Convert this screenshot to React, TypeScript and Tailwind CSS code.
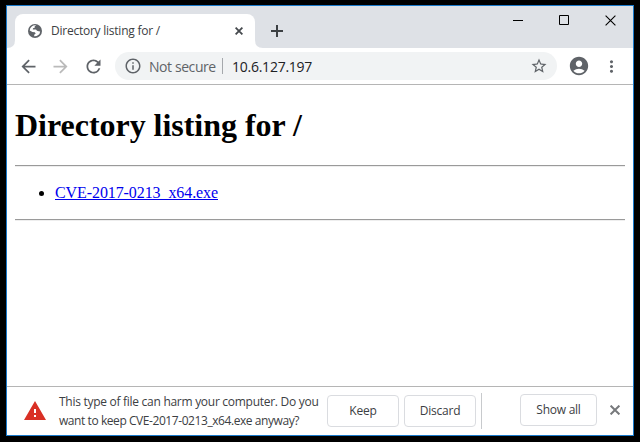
import React from "react";
import {
  MdArrowBack, MdArrowForward, MdRefresh, MdInfoOutline,
  MdStarBorder, MdAccountCircle, MdMoreVert, MdWarning,
} from "react-icons/md";

const Cross = ({ size, width, className }: { size: number; width: number; className: string }) => (
  <svg width={size} height={size} viewBox={`0 0 ${size} ${size}`} className={className} stroke="currentColor" strokeWidth={width} fill="none">
    <path d={`M.6 .6L${size - 0.6} ${size - 0.6}M${size - 0.6} .6L.6 ${size - 0.6}`} />
  </svg>
);

const Globe = () => (
  <svg width="14" height="14" viewBox="0 0 14 14" className="shrink-0">
    <circle cx="7" cy="7" r="7" fill="#5f6368" />
    <path d="M8.2 1.5L6.7 2.2V3.8L5 4.2L4.8 5.6H8L9 6.8L10.6 7.2L12.2 7.4A5.4 5.4 0 0 1 6.2 12.3V10.8L7.7 9.6L6.8 8.3L4.4 8L1.7 6.6A5.4 5.4 0 0 1 8.2 1.5Z" fill="#fff" />
  </svg>
);

function TabStrip() {
  return (
    <div className="flex h-[42px] bg-[#dee1e6]">
      <div className="flex w-2 items-end">
        <svg width="8" height="8" viewBox="0 0 8 8"><path d="M0 8Q8 8 8 0V8Z" fill="#fff" /></svg>
      </div>
      <div className="mt-2 flex h-[34px] w-[240px] items-center rounded-t-lg bg-white pl-[13px]">
        <Globe />
        <span className="ml-[9px] w-[182px] whitespace-nowrap text-[12px] tracking-[-0.24px] text-[#3c4043]">Directory listing for /</span>
        <Cross size={8} width={1.8} className="ml-[2px] shrink-0 text-[#45494d]" />
      </div>
      <div className="flex w-2 items-end">
        <svg width="8" height="8" viewBox="0 0 8 8"><path d="M8 8Q0 8 0 0V8Z" fill="#fff" /></svg>
      </div>
      <svg width="12" height="12" viewBox="0 0 12 12" className="ml-2 mt-[19px]"><path d="M0 6H12M6 0V12" stroke="#3c4043" strokeWidth="2" /></svg>
      <div className="ml-auto flex pr-[17px] pt-[9px] text-black">
        <svg width="10" height="11" viewBox="0 0 10 11"><path d="M0 5.5H10" stroke="currentColor" /></svg>
        <svg width="10" height="10" viewBox="0 0 10 10" className="ml-9"><path d="M.5 .5H9.5V9.5H.5Z" stroke="currentColor" fill="none" /></svg>
        <Cross size={11} width={1.1} className="ml-[36px]" />
      </div>
    </div>
  );
}

function Toolbar() {
  return (
    <div className="flex h-[37px] items-center border-b border-[#b5b5b5] bg-white text-[#5f6368]">
      <MdArrowBack size={21} className="ml-[11px]" />
      <MdArrowForward size={21} className="ml-[11px] text-[#bababa]" />
      <MdRefresh size={21} className="ml-[12px]" />
      <div className="ml-[11px] flex h-7 w-[442px] items-center rounded-full bg-[#f1f3f4] pl-[9px] pr-[9px]">
        <MdInfoOutline size={18} />
        <span className="ml-[7px] w-[73px] whitespace-nowrap text-[14px] tracking-[-0.42px]">Not secure</span>
        <span className="h-4 w-px bg-[#a5a8ac]" />
        <span className="ml-[9px] whitespace-nowrap text-[14px] tracking-[-0.25px] text-[#202124]">10.6.127.197</span>
        <MdStarBorder size={18} className="ml-auto" />
      </div>
      <MdAccountCircle size={22} className="ml-[11px]" />
      <MdMoreVert size={19} className="ml-[12px]" />
    </div>
  );
}

function Page() {
  return (
    <main className="h-[301px] bg-white px-2 pt-[21px] font-['Liberation_Serif',serif] text-black">
      <h1 className="h-[38px] whitespace-nowrap text-[32px] font-bold leading-[38px] tracking-[-0.03px]">Directory listing for /</h1>
      <hr className="mt-[21px] h-[2px] border-0 border-t border-t-[#9a9a9a] bg-[#eee]" />
      <ul className="my-4 list-disc pl-10 text-base leading-[20px]">
        <li><a className="tracking-[-0.09px] text-[#0000ee] underline [text-decoration-skip-ink:none]">CVE-2017-0213_x64.exe</a></li>
      </ul>
      <hr className="h-[2px] border-0 border-t border-t-[#9a9a9a] bg-[#eee]" />
    </main>
  );
}

function DownloadBar() {
  const button = "flex h-8 shrink-0 items-center justify-center whitespace-nowrap rounded border border-[#dadce0]";
  return (
    <div className="flex h-[49px] items-center border-t border-[#b5b5b5] bg-white text-[12px] text-[#3c4043]">
      <MdWarning size={24} className="ml-4 shrink-0 text-[#d93025]" />
      <div className="ml-3 w-[268px] shrink-0 whitespace-nowrap leading-[19px]">
        <p className="tracking-[-0.28px]">This type of file can harm your computer. Do you</p>
        <p className="tracking-[-0.43px]">want to keep CVE-2017-0213_x64.exe anyway?</p>
      </div>
      <button className={`${button} w-[72px] tracking-[-0.2px]`}>Keep</button>
      <button className={`${button} ml-[5px] w-[72px] tracking-[-0.2px]`}>Discard</button>
      <span className="ml-[5px] h-9 w-px bg-[#c8cacd]" />
      <button className={`${button} mb-[2px] ml-[38px] w-[77px] tracking-[-0.25px]`}>Show all</button>
      <Cross size={10} width={2} className="mb-[2px] ml-[13px] shrink-0 text-[#77797c]" />
    </div>
  );
}

export default function App() {
  return (
    <div className="h-[442px] w-[640px] bg-black pl-[6px] pt-[5px] font-['Open_Sans',sans-serif]">
      <div className="h-[431px] w-[628px] overflow-hidden border border-[#1979ca] bg-white">
        <TabStrip />
        <Toolbar />
        <Page />
        <DownloadBar />
      </div>
    </div>
  );
}
